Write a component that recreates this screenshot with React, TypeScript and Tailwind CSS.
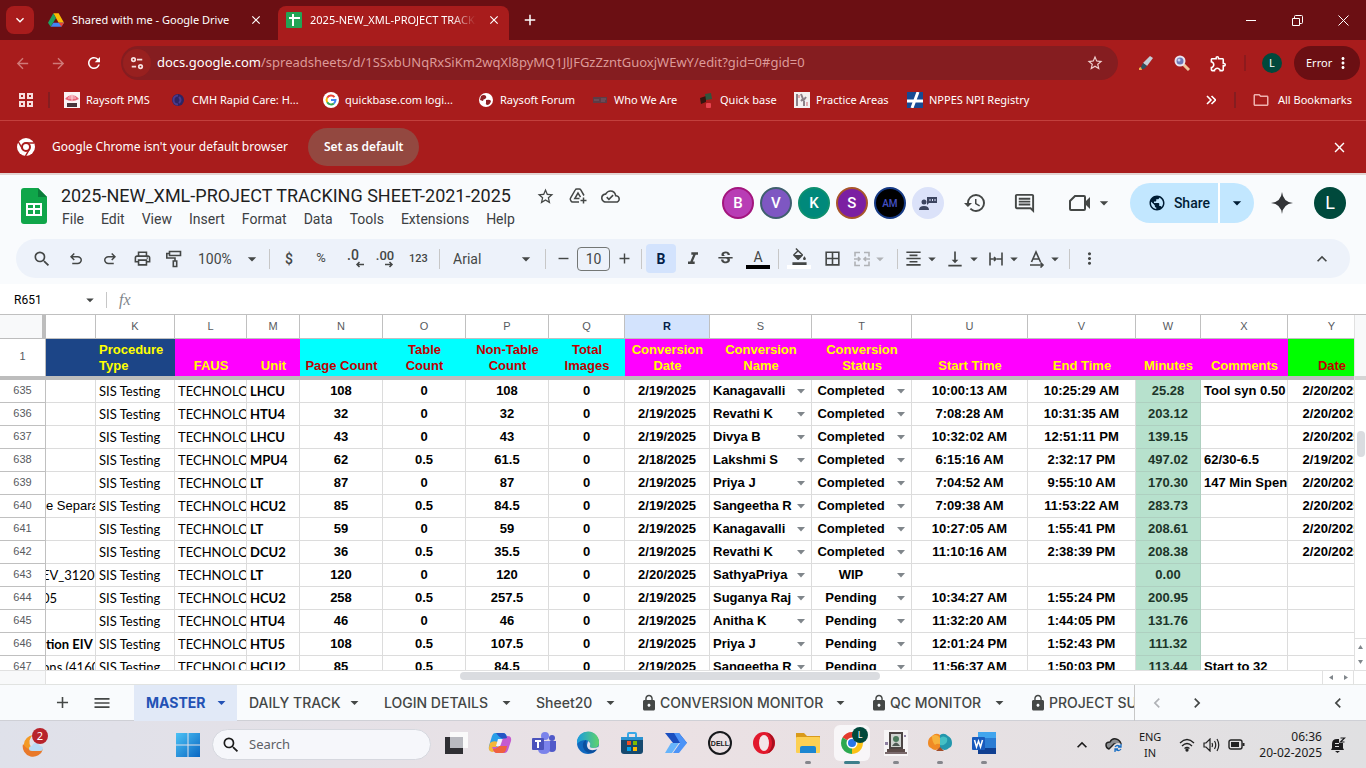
import type { ReactNode } from 'react';
import {
  MdAdd,
  MdArrowBack,
  MdArrowDropDown,
  MdArrowForward,
  MdBorderAll,
  MdChevronLeft,
  MdChevronRight,
  MdClose,
  MdExpandLess,
  MdExpandMore,
  MdFormatAlignCenter,
  MdFormatColorFill,
  MdFormatItalic,
  MdHistory,
  MdLock,
  MdMenu,
  MdMoreVert,
  MdOutlineCloudDone,
  MdOutlineExtension,
  MdOutlineFolder,
  MdOutlineInsertComment,
  MdOutlinePrint,
  MdPublic,
  MdRefresh,
  MdRemove,
  MdSearch,
  MdStarBorder,
  MdStrikethroughS,
  MdVerticalAlignBottom,
} from 'react-icons/md';

const CHROME_FONT = "font-['Noto_Sans',sans-serif]";

interface Row {
  num: number;
  title?: string;
  titleStyle?: string;
  cut?: boolean;
  unit: string;
  pages: string;
  tables: string;
  nonTables: string;
  date: string;
  name: string;
  status: string;
  start: string;
  end: string;
  minutes: string;
  comment?: string;
  qcDate?: string;
}

const PLAIN_TITLE = "font-['Lato',sans-serif] font-normal";
const BOLD_TITLE = "font-['Lato',sans-serif] font-bold";

const ROWS: Row[] = [
  { num: 635, unit: 'LHCU', pages: '108', tables: '0', nonTables: '108', date: '2/19/2025', name: 'Kanagavalli', status: 'Completed', start: '10:00:13 AM', end: '10:25:29 AM', minutes: '25.28', comment: 'Tool syn 0.50', qcDate: '2/20/2025' },
  { num: 636, unit: 'HTU4', pages: '32', tables: '0', nonTables: '32', date: '2/19/2025', name: 'Revathi K', status: 'Completed', start: '7:08:28 AM', end: '10:31:35 AM', minutes: '203.12', qcDate: '2/20/2025' },
  { num: 637, unit: 'LHCU', pages: '43', tables: '0', nonTables: '43', date: '2/19/2025', name: 'Divya B', status: 'Completed', start: '10:32:02 AM', end: '12:51:11 PM', minutes: '139.15', qcDate: '2/20/2025' },
  { num: 638, unit: 'MPU4', pages: '62', tables: '0.5', nonTables: '61.5', date: '2/18/2025', name: 'Lakshmi S', status: 'Completed', start: '6:15:16 AM', end: '2:32:17 PM', minutes: '497.02', comment: '62/30-6.5', qcDate: '2/19/2025' },
  { num: 639, unit: 'LT', pages: '87', tables: '0', nonTables: '87', date: '2/19/2025', name: 'Priya J', status: 'Completed', start: '7:04:52 AM', end: '9:55:10 AM', minutes: '170.30', comment: '147 Min Spent', qcDate: '2/20/2025' },
  { num: 640, title: 'e Separation', titleStyle: 'font-normal', unit: 'HCU2', pages: '85', tables: '0.5', nonTables: '84.5', date: '2/19/2025', name: 'Sangeetha R', status: 'Completed', start: '7:09:38 AM', end: '11:53:22 AM', minutes: '283.73', qcDate: '2/20/2025' },
  { num: 641, unit: 'LT', pages: '59', tables: '0', nonTables: '59', date: '2/19/2025', name: 'Kanagavalli', status: 'Completed', start: '10:27:05 AM', end: '1:55:41 PM', minutes: '208.61', qcDate: '2/20/2025' },
  { num: 642, unit: 'DCU2', pages: '36', tables: '0.5', nonTables: '35.5', date: '2/19/2025', name: 'Revathi K', status: 'Completed', start: '11:10:16 AM', end: '2:38:39 PM', minutes: '208.38', qcDate: '2/20/2025' },
  { num: 643, title: 'EV_3120', titleStyle: PLAIN_TITLE, cut: true, unit: 'LT', pages: '120', tables: '0', nonTables: '120', date: '2/20/2025', name: 'SathyaPriya', status: 'WIP', start: '', end: '', minutes: '0.00' },
  { num: 644, title: '05', titleStyle: PLAIN_TITLE, cut: true, unit: 'HCU2', pages: '258', tables: '0.5', nonTables: '257.5', date: '2/19/2025', name: 'Suganya Raj', status: 'Pending', start: '10:34:27 AM', end: '1:55:24 PM', minutes: '200.95' },
  { num: 645, unit: 'HTU4', pages: '46', tables: '0', nonTables: '46', date: '2/19/2025', name: 'Anitha K', status: 'Pending', start: '11:32:20 AM', end: '1:44:05 PM', minutes: '131.76' },
  { num: 646, title: 'tion EIV', titleStyle: BOLD_TITLE, unit: 'HTU5', pages: '108', tables: '0.5', nonTables: '107.5', date: '2/19/2025', name: 'Priya J', status: 'Pending', start: '12:01:24 PM', end: '1:52:43 PM', minutes: '111.32' },
  { num: 647, title: 'ons (4160)', titleStyle: PLAIN_TITLE, cut: true, unit: 'HCU2', pages: '85', tables: '0.5', nonTables: '84.5', date: '2/19/2025', name: 'Sangeetha R', status: 'Pending', start: '11:56:37 AM', end: '1:50:03 PM', minutes: '113.44', comment: 'Start to 32' },
];

const COLUMNS = [
  { letter: '', width: 50, lines: [], style: 'bg-[#1c4587] text-[#ffff00] text-left' },
  { letter: 'K', width: 79, lines: ['Procedure', 'Type'], style: 'bg-[#1c4587] text-[#ffff00] text-left' },
  { letter: 'L', width: 72, lines: ['FAUS'], style: 'bg-[#ff00ff] text-[#ffff00] text-center' },
  { letter: 'M', width: 53, lines: ['Unit'], style: 'bg-[#ff00ff] text-[#ffff00] text-center' },
  { letter: 'N', width: 83, lines: ['Page Count'], style: 'bg-[#00ffff] text-[#c00000] text-center' },
  { letter: 'O', width: 83, lines: ['Table', 'Count'], style: 'bg-[#00ffff] text-[#c00000] text-center' },
  { letter: 'P', width: 83, lines: ['Non-Table', 'Count'], style: 'bg-[#00ffff] text-[#c00000] text-center' },
  { letter: 'Q', width: 76, lines: ['Total', 'Images'], style: 'bg-[#00ffff] text-[#c00000] text-center' },
  { letter: 'R', width: 85, lines: ['Conversion', 'Date'], style: 'bg-[#ff00ff] text-[#ffff00] text-center' },
  { letter: 'S', width: 102, lines: ['Conversion', 'Name'], style: 'bg-[#ff00ff] text-[#ffff00] text-center' },
  { letter: 'T', width: 100, lines: ['Conversion', 'Status'], style: 'bg-[#ff00ff] text-[#ffff00] text-center' },
  { letter: 'U', width: 116, lines: ['Start Time'], style: 'bg-[#ff00ff] text-[#ffff00] text-center' },
  { letter: 'V', width: 108, lines: ['End Time'], style: 'bg-[#ff00ff] text-[#ffff00] text-center' },
  { letter: 'W', width: 65, lines: ['Minutes'], style: 'bg-[#ff00ff] text-[#ffff00] text-center' },
  { letter: 'X', width: 87, lines: ['Comments'], style: 'bg-[#ff00ff] text-[#ffff00] text-center' },
  { letter: 'Y', width: 88, lines: ['Date'], style: 'bg-[#00ff00] text-[#c00000] text-center' },
];

const BOOKMARKS = [
  { label: 'Raysoft PMS', width: 'w-[106px]', icon: <PmsIcon /> },
  { label: 'CMH Rapid Care: H...', width: 'w-[153px]', icon: <CmhIcon /> },
  { label: 'quickbase.com logi...', width: 'w-[155px]', icon: <GoogleIcon /> },
  { label: 'Raysoft Forum', width: 'w-[114px]', icon: <GlobeIcon /> },
  { label: 'Who We Are', width: 'w-[106px]', icon: <WhoIcon /> },
  { label: 'Quick base', width: 'w-[96px]', icon: <QuickbaseIcon /> },
  { label: 'Practice Areas', width: 'w-[113px]', icon: <PracticeIcon /> },
  { label: 'NPPES NPI Registry', width: 'w-[130px]', icon: <NppesIcon /> },
];

const MENUS = ['File', 'Edit', 'View', 'Insert', 'Format', 'Data', 'Tools', 'Extensions', 'Help'];

const PEOPLE = [
  { letter: 'B', style: 'bg-[#b83db5] border-[#a3157e] text-white text-[15px]' },
  { letter: 'V', style: 'bg-[#7e57c2] border-[#3f5f6e] text-white text-[15px]' },
  { letter: 'K', style: 'bg-[#00897b] border-[#0d8f6f] text-white text-[15px]' },
  { letter: 'S', style: 'bg-[#7b1fa2] border-[#a8562a] text-white text-[15px]' },
  { letter: 'AM', style: 'bg-black border-[#163a85] text-[#4450c4] text-[10px]' },
];

const SHEET_TABS = [
  { label: 'DAILY TRACK', width: 'w-[135px]', locked: false },
  { label: 'LOGIN DETAILS', width: 'w-[152px]', locked: false },
  { label: 'Sheet20', width: 'w-[104px]', locked: false },
  { label: 'CONVERSION MONITOR', width: 'w-[230px]', locked: true },
  { label: 'QC MONITOR', width: 'w-[159px]', locked: true },
  { label: 'PROJECT SUMMARY', width: 'w-[190px]', locked: true },
];

/* ---------- bookmark icons ---------- */

function PmsIcon() {
  return (
    <svg width="16" height="16" viewBox="0 0 16 16">
      <rect width="16" height="16" fill="#fbf3f4" />
      <path d="M1 7Q8-1 15 7Q8 11 1 7Z" fill="#e8657a" />
      <path d="M4 6h8M5 4h6M8 2v8" stroke="#fbd5da" strokeWidth="1" />
      <rect x="3" y="11" width="10" height="4" fill="#47353b" />
    </svg>
  );
}

function CmhIcon() {
  return (
    <svg width="16" height="16" viewBox="0 0 16 16">
      <circle cx="8" cy="8" r="6" fill="#2d2463" />
      <path d="M8 3.500a4.500 4.500 0 1 0 0 9M9 5q3 3 0 6" stroke="#4a3a8c" fill="none" strokeWidth="2" />
    </svg>
  );
}

function GoogleIcon() {
  return (
    <svg width="16" height="16" viewBox="0 0 16 16">
      <circle cx="8" cy="8" r="8" fill="#fff" />
      <g fill="none" strokeWidth="2">
        <path d="M11.500 5.200A4.500 4.500 0 0 0 4.200 5.700" stroke="#ea4335" />
        <path d="M4.200 5.700A4.500 4.500 0 0 0 4.200 10.300" stroke="#fbbc05" />
        <path d="M4.200 10.300A4.500 4.500 0 0 0 10.900 11.400" stroke="#34a853" />
        <path d="M10.900 11.400A4.500 4.500 0 0 0 12.500 8H8" stroke="#4285f4" />
      </g>
    </svg>
  );
}

function GlobeIcon() {
  return (
    <svg width="16" height="16" viewBox="0 0 16 16">
      <circle cx="8" cy="8" r="7" fill="#fff" />
      <path d="M3 4q3-2 5 0 1 2-1 3-2 0-2 2l-3-1zM8 8q4-1 5 1-1 4-4 4-2-1-1-2z" fill="#8d2024" />
    </svg>
  );
}

function WhoIcon() {
  return (
    <svg width="16" height="16" viewBox="0 0 16 16">
      <rect x="1" y="5" width="14" height="6" fill="#5d3c46" />
      <path d="M2 8h5M9 7h5M9 9h4" stroke="#7d5b66" strokeWidth="1" />
    </svg>
  );
}

function QuickbaseIcon() {
  return (
    <svg width="16" height="16" viewBox="0 0 16 16">
      <path d="M2 6l6-2v6l-5 2z" fill="#34150f" />
      <path d="M7 2l6-1 1 6-6 1z" fill="#31553d" />
      <rect x="8" y="11" width="5" height="5" rx="1" fill="#e8434f" />
    </svg>
  );
}

function PracticeIcon() {
  return (
    <svg width="16" height="16" viewBox="0 0 16 16">
      <rect width="16" height="16" fill="#f4f0f0" />
      <path d="M3 2v12M7 2l2 5-2 2M9 9l3-4M10 9v5" stroke="#8b8088" strokeWidth="2" fill="none" />
      <path d="M5 3v3M13 10v4" stroke="#c96a70" />
    </svg>
  );
}

function NppesIcon() {
  return (
    <svg width="16" height="16" viewBox="0 0 16 16">
      <rect width="16" height="16" fill="#174a92" />
      <path d="M0 9h16M11 0L5 16" stroke="#fff" strokeWidth="3" />
    </svg>
  );
}

/* ---------- browser icons ---------- */

function DriveIcon() {
  return (
    <svg width="16" height="16" viewBox="0 0 24 22">
      <path d="M8 1h8l8 14h-8z" fill="#fbbc04" />
      <path d="M8 1l4 7-8 13-4-6z" fill="#1ea362" />
      <path d="M8 15h16l-4 6H4z" fill="#4285f4" />
      <path d="M16 15h8l-4 6z" fill="#ea4335" />
    </svg>
  );
}

function SheetsFavicon() {
  return (
    <svg width="16" height="16" viewBox="0 0 16 16">
      <rect width="16" height="16" rx="1" fill="#23a455" />
      <path d="M3 6h11M7 2v12" stroke="#fff" strokeWidth="2" />
    </svg>
  );
}

function TuneIcon() {
  return (
    <svg width="14" height="14" viewBox="0 0 16 16" fill="none" stroke="#f6dede" strokeWidth="2">
      <circle cx="4" cy="4" r="2" />
      <path d="M8 4h6M2 12h5" />
      <circle cx="12" cy="12" r="2" />
    </svg>
  );
}

function AppsIcon() {
  return (
    <svg width="16" height="16" viewBox="0 0 16 16" fill="none" stroke="#f6dede" strokeWidth="2">
      <path d="M2 2h4v4H2zM10 2h4v4h-4zM2 10h4v4H2zM10 10h4v4h-4z" />
    </svg>
  );
}

function PenIcon() {
  return (
    <svg width="16" height="16" viewBox="0 0 16 16">
      <path d="M5 8l7-7 3 2-6 8z" fill="#c3cdd6" />
      <path d="M5 8l4 3-3 3H2z" fill="#2d5261" />
      <path d="M1 13l2-1 1 3H1z" fill="#f0b14a" />
    </svg>
  );
}

function LensIcon() {
  return (
    <svg width="16" height="16" viewBox="0 0 16 16">
      <path d="M9 9l6 6" stroke="#f1c69c" strokeWidth="3" />
      <circle cx="6" cy="6" r="4.500" fill="#6e78b8" stroke="#e9e3ee" strokeWidth="2" />
      <circle cx="5" cy="5" r="1.500" fill="#c7d0f0" />
    </svg>
  );
}

function ChromeMono() {
  return (
    <svg width="18" height="18" viewBox="0 0 18 18">
      <circle cx="9" cy="9" r="9" fill="#fff" />
      <circle cx="9" cy="9" r="4" fill="none" stroke="#a81c1c" strokeWidth="2" />
      <path d="M9 5h8M5.500 11L1.500 4M12.500 11L8.500 18" stroke="#a81c1c" strokeWidth="1.500" />
    </svg>
  );
}

/* ---------- sheet icons ---------- */

function SheetsLogo() {
  return (
    <svg width="26" height="36" viewBox="0 0 26 36">
      <path d="M3 0h14l9 9v24a3 3 0 0 1-3 3H3a3 3 0 0 1-3-3V3a3 3 0 0 1 3-3z" fill="#10a64a" />
      <path d="M17 0l9 9h-9z" fill="#0b7d3b" />
      <path d="M5 15h16v13H5zm2 2v3h5v-3zm7 0v3h5v-3zm-7 5v4h5v-4zm7 0v4h5v-4z" fill="#fff" fillRule="evenodd" />
    </svg>
  );
}

function MoveIcon() {
  return (
    <svg width="18" height="18" viewBox="0 0 18 18" fill="none" stroke="currentColor" strokeWidth="1.500">
      <path d="M10 15H3.500q-1 0-1.400-.800L1.500 13q-.5-1 0-1.800L6.200 3q.5-1 1.500-1h2.600q1 0 1.500 1l3.200 5.500" />
      <path d="M10.500 11.500H5.800L9 6l2.500 4.200M14.500 10.500v6M11.500 13.500h6" />
    </svg>
  );
}

function UndoIcon({ flip = false }: { flip?: boolean }) {
  return (
    <svg width="18" height="18" viewBox="0 -960 960 960" fill="currentColor" className={flip ? '-scale-x-100' : ''}>
      <path d="M280-200v-80h284q63 0 109.500-40T720-420q0-60-46.500-100T564-560H312l104 104-56 56-200-200 200-200 56 56-104 104h252q97 0 166.500 63T800-420q0 94-69.500 157T564-200H280Z" />
    </svg>
  );
}

function PaintIcon() {
  return (
    <svg width="18" height="18" viewBox="0 0 18 18" fill="none" stroke="currentColor" strokeWidth="1.600">
      <path d="M4.500 1.500h11v4h-11zM4.500 3.500H1.800v4.500H10v3" />
      <path d="M8.300 11h3.400v5.500H8.300z" />
    </svg>
  );
}

function MergeIcon() {
  return (
    <svg width="18" height="18" viewBox="0 0 18 18" fill="none" stroke="currentColor" strokeWidth="1.600">
      <path d="M7 2.500H2v4M11 2.500h5v4M7 15.500H2v-4M11 15.500h5v-4M1 9h6M11 9h6M5 7l2 2-2 2M13 7l-2 2 2 2" />
    </svg>
  );
}

function WrapIcon() {
  return (
    <svg width="18" height="18" viewBox="0 0 18 18" fill="none" stroke="currentColor" strokeWidth="1.600">
      <path d="M3 2.500v13M15 2.500v13M3 9h5M10 9h5M7 7l2 2-2 2" />
    </svg>
  );
}

function RotateIcon() {
  return (
    <svg width="18" height="18" viewBox="0 0 18 18" fill="none" stroke="currentColor" strokeWidth="1.600">
      <path d="M3.500 12L8 2l4.500 10M5 9h6M2 15h13M12.500 12.500L15 15l-2.500 2.500" />
    </svg>
  );
}

function DecimalArrow({ right = false }: { right?: boolean }) {
  return (
    <svg width="9" height="7" viewBox="0 0 9 7" stroke="currentColor" strokeWidth="1.500" fill="none" className={right ? '-scale-x-100' : ''}>
      <path d="M9 3.500H2M4.500 1L2 3.500 4.500 6" />
    </svg>
  );
}

function MeetIcon() {
  return (
    <svg width="24" height="20" viewBox="0 0 24 20" fill="none">
      <path d="M7 3h9q1 0 1 1v12q0 1-1 1H3q-1 0-1-1V8z" stroke="#444746" strokeWidth="2" />
      <path d="M17 9l5-5v12l-5-5z" fill="#444746" />
    </svg>
  );
}

function PeopleIcon() {
  return (
    <svg width="20" height="18" viewBox="0 0 20 18" fill="#3c4560">
      <circle cx="6" cy="8" r="2.500" />
      <path d="M1 16q0-4 5-4t5 4z" />
      <path d="M9 3h10v6h-8l-2 2z" />
      <path d="M12 5v2M14.500 5v2M17 5v2" stroke="#dbe2f9" />
    </svg>
  );
}

function SparkIcon() {
  return (
    <svg width="24" height="24" viewBox="0 0 24 24">
      <path d="M12 1Q13 11 23 12Q13 13 12 23Q11 13 1 12Q11 11 12 1Z" fill="#333538" />
      <path d="M12 5Q13 11 19 12Q13 13 12 19Q11 13 5 12Q11 11 12 5Z" fill="#333538" stroke="#333538" />
    </svg>
  );
}

/* ---------- taskbar icons ---------- */

function WeatherIcon() {
  return (
    <svg width="26" height="26" viewBox="0 0 26 26">
      <path d="M13 3A10 10 0 1 0 23 17A8 8 0 0 1 13 3Z" fill="#f39a26" />
      <path d="M3 12a10 10 0 0 0 20 5Q10 22 3 12Z" fill="#e9792a" />
      <path d="M12 19q-3 0-3-2.500t3-2.500q1-3 4-3t4 3q3 0 3 2.500T20 19z" fill="#b9dcf6" />
    </svg>
  );
}

function WindowsIcon() {
  return (
    <svg width="24" height="24" viewBox="0 0 24 24">
      <linearGradient id="win" x1="0" y1="0" x2="1" y2="1">
        <stop offset="0" stopColor="#4cc2f5" />
        <stop offset="1" stopColor="#0a66c2" />
      </linearGradient>
      <path d="M0 0h11.500v11.500H0zM12.500 0H24v11.500H12.500zM0 12.500h11.500V24H0zM12.500 12.500H24V24H12.500z" fill="url(#win)" />
    </svg>
  );
}

function TaskViewIcon() {
  return (
    <svg width="26" height="26" viewBox="0 0 26 26">
      <rect x="7" y="2" width="18" height="16" fill="#fafafa" />
      <rect x="2" y="7" width="18" height="17" fill="#2f2f33" />
      <rect x="7" y="7" width="13" height="11" fill="#b9bac0" />
    </svg>
  );
}

function CopilotIcon() {
  return (
    <svg width="24" height="24" viewBox="0 0 24 24">
      <path d="M7 2h8q3 0 4 4l1 2h-6q-2 0-3 3l-2 6q-1 3-4 3H4q-4 0-3-5L4 5q1-3 3-3z" fill="#2a9fe8" />
      <path d="M2 12q3-3 8-1l-2 7q-1 3-4 3-4-1-3-5z" fill="#f3b63a" />
      <path d="M17 22H9q-3 0-4-4l-1-2h6q2 0 3-3l2-6q1-2 4-2 5 0 4 5l-3 9q-1 3-3 3z" fill="#c45bd0" />
      <path d="M5 18q3 0 5-2l1-1h8l-1 4q-1 3-3 3H9q-3 0-4-4z" fill="#f0603f" />
      <path d="M10 8h4l-2 7H8z" fill="#f4f2fb" />
      <path d="M8 2h7q3 0 4 5-4 1-6 0T8 2z" fill="#2556c4" />
    </svg>
  );
}

function TeamsIcon() {
  return (
    <svg width="26" height="24" viewBox="0 0 26 24">
      <circle cx="21" cy="7" r="3" fill="#5059c9" />
      <circle cx="14" cy="5" r="4" fill="#7b83eb" />
      <path d="M17 10h8v7q0 4-4 4t-4-3z" fill="#5059c9" />
      <path d="M8 10h11v8q0 5-6 5t-6-5z" fill="#7b83eb" />
      <rect x="1" y="7" width="12" height="12" rx="1" fill="#4b53bc" />
      <path d="M4 10h6M7 10v7" stroke="#fff" strokeWidth="2" />
    </svg>
  );
}

function EdgeIcon() {
  return (
    <svg width="24" height="24" viewBox="0 0 24 24">
      <linearGradient id="edgeTop" x1="0" y1="0" x2="1" y2="0">
        <stop offset="0" stopColor="#1a9be0" />
        <stop offset="1" stopColor="#5fd36b" />
      </linearGradient>
      <circle cx="12" cy="12" r="11" fill="#1068bf" />
      <path d="M1 11A11 11 0 0 1 23 12q0 5-6 5-4 0-3-3 1-4-4-5-6 0-9 4z" fill="url(#edgeTop)" />
      <path d="M10 9q-4 2-3 7 2 6 8 6 4 0 7-5-7 4-11-1-2-4-1-7z" fill="#0b4f9e" />
      <path d="M12 10q3 2 2 4-1 3 3 3 3 0 5-1l1 2-5 1q-7 1-7-5z" fill="#e6e0ea" />
    </svg>
  );
}

function StoreIcon() {
  return (
    <svg width="24" height="24" viewBox="0 0 24 24">
      <path d="M8 6V3q0-1 1-1h6q1 0 1 1v3" stroke="#38a8e8" strokeWidth="2" fill="none" />
      <path d="M1 6h22v14q0 3-3 3H4q-3 0-3-3z" fill="#16496f" />
      <path d="M1 6h22v3H1z" fill="#2a92d0" />
      <path d="M7 10h4v4H7z" fill="#f25022" />
      <path d="M13 10h4v4h-4z" fill="#7fba00" />
      <path d="M7 16h4v4H7z" fill="#00a4ef" />
      <path d="M13 16h4v4h-4z" fill="#ffb900" />
    </svg>
  );
}

function AutomateIcon() {
  return (
    <svg width="24" height="22" viewBox="0 0 24 22">
      <path d="M1 1h14l8 10H9z" fill="#1b4fc0" />
      <path d="M15 1l8 10-8 10H9l7-10-6-10z" fill="#4c93f7" />
      <path d="M7 11h8l-7 10H1z" fill="#66b4fb" />
    </svg>
  );
}

function DellIcon() {
  return (
    <svg width="26" height="26" viewBox="0 0 26 26">
      <circle cx="13" cy="13" r="11" fill="none" stroke="#17191c" strokeWidth="2" />
      <text x="13" y="16" textAnchor="middle" fontSize="7" fontWeight="700" fontFamily="Liberation Sans" fill="#17191c">
        DELL
      </text>
    </svg>
  );
}

function OperaIcon() {
  return (
    <svg width="24" height="24" viewBox="0 0 24 24">
      <circle cx="12" cy="12" r="11" fill="#e2182c" />
      <path d="M15 1.500A11 11 0 0 1 15 22.500Q20 18 20 12T15 1.500z" fill="#a7101f" />
      <ellipse cx="12" cy="12" rx="5" ry="8" fill="#f3e6e8" />
    </svg>
  );
}

function ExplorerIcon() {
  return (
    <svg width="26" height="24" viewBox="0 0 26 24">
      <path d="M1 2h8l3 3h13v6H1z" fill="#d99a1b" />
      <rect x="1" y="6" width="24" height="16" rx="1" fill="#fcd053" />
      <path d="M5 22v-5q0-2 2-2h12q2 0 2 2v5z" fill="#1c86d1" />
    </svg>
  );
}

function ChromeIcon() {
  return (
    <svg width="24" height="24" viewBox="0 0 24 24">
      <path d="M12 12L2.500 6.500A11 11 0 0 1 21.500 6.500H12z" fill="#e33b2e" />
      <path d="M12 12L21.500 6.500A11 11 0 0 1 12 23z" fill="#fbc116" />
      <path d="M12 12V23A11 11 0 0 1 2.500 6.500z" fill="#2da94f" />
      <circle cx="12" cy="12" r="5.500" fill="#fff" />
      <circle cx="12" cy="12" r="4" fill="#2a76e8" />
    </svg>
  );
}

function KioskIcon() {
  return (
    <svg width="24" height="26" viewBox="0 0 24 26">
      <rect width="24" height="26" fill="#f6f4f5" />
      <path d="M6 3h12v15H6z" fill="#cfd3d0" stroke="#4c4544" strokeWidth="2" />
      <circle cx="12" cy="9" r="3" fill="#4b7a5c" />
      <path d="M8 16q4-7 8 0z" fill="#4f5a54" />
      <path d="M3 19h18v3H3z" fill="#5b4a48" />
      <path d="M1 22h22v2H1z" fill="#7a6a6c" />
      <path d="M1 12h3v3H1zM20 5h2v2h-2z" fill="#8e7fa0" />
    </svg>
  );
}

function BrainIcon() {
  return (
    <svg width="26" height="22" viewBox="0 0 26 22">
      <path d="M13 3q-4-3-8 1-4 2-4 7 0 4 3 5 4 4 9 0z" fill="#f08a24" />
      <path d="M5 4q5-3 8 2v6q-3-1-5 1-3-3-3-9z" fill="#f6b23c" />
      <path d="M13 3q4-3 8 1 4 2 4 7 0 4-3 5-4 4-9 0z" fill="#2397ad" />
      <path d="M13 6q3-3 7 0 1 4-2 6-2 2-5 1z" fill="#45c0c4" />
      <path d="M9 19l4-4 4 4z" fill="#a34d2a" />
    </svg>
  );
}

function WordIcon() {
  return (
    <svg width="26" height="24" viewBox="0 0 26 24">
      <rect x="7" y="1" width="18" height="22" rx="1" fill="#2b7cd3" />
      <path d="M7 1h18v6H7z" fill="#41a5ee" />
      <path d="M7 17h18v6H7z" fill="#103f91" />
      <rect x="1" y="6" width="13" height="13" rx="1" fill="#185abd" />
      <path d="M3.500 9l2 7 2-6 2 6 2-7" stroke="#fff" strokeWidth="1.500" fill="none" />
    </svg>
  );
}

function OneDriveIcon() {
  return (
    <svg width="18" height="16" viewBox="0 0 18 16">
      <path d="M4 12q-3-1-3-4t4-3q2-4 6-3t5 5H9z" fill="#8b8d90" stroke="#222" strokeWidth="1.500" />
      <circle cx="13" cy="11" r="5" fill="#e6e1e2" />
      <path d="M10 10q2-3 6 0M16 12q-2 3-6 0M16 7v3h-3M10 15v-3h3" stroke="#1a6fc4" strokeWidth="1.300" fill="none" />
    </svg>
  );
}

function WifiIcon() {
  return (
    <svg width="16" height="14" viewBox="0 0 16 14" fill="none" stroke="#222" strokeWidth="1.300">
      <path d="M1 5q7-7 14 0M3 8q5-5 10 0M5.500 10.500q2.500-2 5 0" />
      <circle cx="8" cy="12" r="1" fill="#222" />
    </svg>
  );
}

function SpeakerIcon() {
  return (
    <svg width="17" height="14" viewBox="0 0 17 14" fill="none" stroke="#222" strokeWidth="1.200">
      <path d="M1 5h2l4-4v12L3 9H1zM9 5q1 2 0 4M11.500 3q2.500 4 0 8M14 1q3.500 6 0 12" />
    </svg>
  );
}

function BatteryIcon() {
  return (
    <svg width="17" height="12" viewBox="0 0 17 12">
      <rect x="1" y="1" width="13" height="9" rx="2" fill="none" stroke="#222" strokeWidth="1.400" />
      <rect x="3" y="3" width="8" height="5" fill="#222" />
      <path d="M15.500 4v3" stroke="#222" strokeWidth="2" />
    </svg>
  );
}

function BellIcon() {
  return (
    <svg width="16" height="16" viewBox="0 0 16 16">
      <path d="M2 11V7q0-5 5-5h2v4h4v5l1 2H1z" fill="#1c1c1e" />
      <path d="M5 14h5l-2.500 2z" fill="#1c1c1e" />
      <path d="M10.500 1h4l-4 4h4" stroke="#1c1c1e" strokeWidth="1.200" fill="none" />
      <path d="M5 6.500h4M5 9.500h4" stroke="#e0e0e2" strokeWidth="1" fill="none" />
    </svg>
  );
}

/* ---------- browser chrome ---------- */

function TabStrip() {
  return (
    <div className="flex h-10 items-end bg-[#6b0f13] text-[11px] text-white">
      <button aria-label="Search tabs" className="mb-1.5 ml-1.5 flex size-7 items-center justify-center rounded-lg bg-[#a81c1c]">
        <MdExpandMore size={16} />
      </button>
      <div className="flex h-[34px] w-[244px] items-center pb-1.5 pl-3.5">
        <DriveIcon />
        <span className="ml-2 flex-1 whitespace-nowrap">Shared with me - Google Drive</span>
        <button aria-label="Close tab" className="mr-3.5 flex size-4 items-center justify-center">
          <MdClose size={14} />
        </button>
      </div>
      <div className="flex h-[34px] w-[231px] items-center rounded-t-lg bg-[#a81c1c] pb-1.5 pl-2">
        <SheetsFavicon />
        <span className="ml-2 w-[166px] overflow-hidden whitespace-nowrap [mask-image:linear-gradient(to_right,black_85%,transparent)]">
          2025-NEW_XML-PROJECT TRACKING
        </span>
        <button aria-label="Close tab" className="ml-2.5 flex size-4 items-center justify-center">
          <MdClose size={14} />
        </button>
      </div>
      <button aria-label="New tab" className="mb-2.5 ml-[11px] flex size-5 items-center justify-center">
        <MdAdd size={18} />
      </button>
      <div className="ml-auto flex h-10">
        <button aria-label="Minimise" className="flex w-[46px] items-center justify-center">
          <svg width="10" height="10" stroke="white"><path d="M0 5.500h10" /></svg>
        </button>
        <button aria-label="Restore" className="flex w-[46px] items-center justify-center">
          <svg width="11" height="11" stroke="white" fill="none"><path d="M.5 3.500h7v7h-7zM2.500 3.500v-2q0-1 1-1h6q1 0 1 1v6q0 1-1 1h-2" /></svg>
        </button>
        <button aria-label="Close" className="flex w-[46px] items-center justify-center">
          <svg width="11" height="11" stroke="white"><path d="M.5 .5l10 10M10.500 .5l-10 10" /></svg>
        </button>
      </div>
    </div>
  );
}

function AddressBar() {
  return (
    <div className="flex h-[46px] items-center pl-1 text-white">
      <button aria-label="Back" className="flex w-9 justify-center text-[#d07a78]"><MdArrowBack size={17} /></button>
      <button aria-label="Forward" className="flex w-9 justify-center text-[#d07a78]"><MdArrowForward size={17} /></button>
      <button aria-label="Reload" className="flex w-9 justify-center"><MdRefresh size={18} /></button>
      <div className="ml-[9px] flex h-[34px] flex-1 items-center rounded-full bg-[#851d20] pr-3.5 pl-0.5">
        <button aria-label="Site information" className="flex size-7 items-center justify-center rounded-full bg-[#98201f]"><TuneIcon /></button>
        <p className="ml-1.5 flex-1 truncate text-[13px] text-[#dd9a98]">
          <span className="text-white">docs.google.com</span>/spreadsheets/d/1SSxbUNqRxSiKm2wqXl8pyMQ1JlJFGzZzntGuoxjWEwY/edit?gid=0#gid=0
        </p>
        <button aria-label="Bookmark this tab"><MdStarBorder size={18} className="text-[#f0cfce]" /></button>
      </div>
      <div className="ml-2.5 flex items-center">
        <button aria-label="Pen" className="flex w-9 justify-center"><PenIcon /></button>
        <button aria-label="Zoom" className="flex w-9 justify-center"><LensIcon /></button>
        <button aria-label="Extensions" className="flex w-9 justify-center"><MdOutlineExtension size={19} /></button>
      </div>
      <span className="ml-2 h-4 w-0.5 bg-[#8d1a1d]" />
      <span className="ml-4 flex size-5 items-center justify-center rounded-full bg-[#00493c] text-[11px]">L</span>
      <button className="mr-1.5 ml-3 flex h-[34px] w-[66px] items-center rounded-full bg-[#6b0f13] pl-3 text-[11px]">
        Error
        <MdMoreVert size={18} className="ml-0.5 shrink-0" />
      </button>
    </div>
  );
}

function BookmarksBar() {
  return (
    <nav className="flex h-[35px] items-center border-b border-[#c2403d] pb-1.5 text-[11px] text-white">
      <button aria-label="Apps" className="ml-[18px]"><AppsIcon /></button>
      <span className="mr-3.5 ml-3.5 h-4 w-0.5 bg-[#851d20]" />
      {BOOKMARKS.map((mark) => (
        <a key={mark.label} href="#" className={`flex shrink-0 items-center gap-1.5 whitespace-nowrap ${mark.width}`}>
          {mark.icon}
          {mark.label}
        </a>
      ))}
      <button aria-label="More bookmarks" className="ml-auto">
        <svg width="10" height="10" viewBox="0 0 10 10" fill="none" stroke="white" strokeWidth="1.600"><path d="M1 1l4 4-4 4M5.500 1l4 4-4 4" /></svg>
      </button>
      <span className="mr-4 ml-[18px] h-4 w-0.5 bg-[#851d20]" />
      <a href="#" className="mr-3.5 flex items-center gap-2">
        <MdOutlineFolder size={18} className="text-[#eeb0ae]" />
        All Bookmarks
      </a>
    </nav>
  );
}

function InfoBar() {
  return (
    <div className="flex h-[52px] items-center pl-[17px] text-xs text-white">
      <ChromeMono />
      <span className="ml-[17px]">Google Chrome isn't your default browser</span>
      <button className="ml-5 h-[38px] rounded-full bg-[#934840] px-4 font-semibold">Set as default</button>
      <button aria-label="Dismiss" className="mr-[18px] ml-auto"><MdClose size={17} /></button>
    </div>
  );
}

/* ---------- sheet ---------- */

function SheetHeader() {
  return (
    <header className="flex h-[63px] items-start border-t-2 border-[#e2d5d3] pl-[21px] text-[#1f1f1f]">
      <div className="pt-[13px]"><SheetsLogo /></div>
      <div className="ml-3.5 pt-[9px]">
        <div className="flex items-center text-[#444746]">
          <h1 className="text-[18px] leading-6 whitespace-nowrap text-[#1f1f1f]">2025-NEW_XML-PROJECT TRACKING SHEET-2021-2025</h1>
          <button aria-label="Star" className="ml-[25px]"><MdStarBorder size={19} /></button>
          <button aria-label="Move" className="ml-3.5"><MoveIcon /></button>
          <button aria-label="Saved to Drive" className="ml-3.5"><MdOutlineCloudDone size={19} /></button>
        </div>
        <nav className="flex gap-[17px] pt-px pl-px text-sm leading-5 text-[#3c4043]">
          {MENUS.map((menu) => (
            <button key={menu}>{menu}</button>
          ))}
        </nav>
      </div>
      <div className="mr-5 ml-auto flex h-14 shrink-0 items-center">
        <div className="flex gap-1.5">
          {PEOPLE.map((person) => (
            <span key={person.letter} className={`flex size-8 items-center justify-center rounded-full border-2 font-medium ${person.style}`}>
              {person.letter}
            </span>
          ))}
          <button aria-label="More people" className="flex size-8 items-center justify-center rounded-full bg-[#dbe2f9]"><PeopleIcon /></button>
        </div>
        <button aria-label="Version history" className="ml-[19px] text-[#444746]"><MdHistory size={24} /></button>
        <button aria-label="Comments" className="ml-[26px] text-[#444746]"><MdOutlineInsertComment size={23} /></button>
        <button aria-label="Meet" className="ml-8 flex items-center text-[#444746]">
          <MeetIcon />
          <MdArrowDropDown size={20} className="ml-0.5" />
        </button>
        <div className="ml-4 flex h-10 items-center rounded-full bg-[#c2e7ff] text-[#001d35]">
          <button className="flex h-10 items-center gap-2 border-r-2 border-white pr-2 pl-[18px] text-sm font-medium"><MdPublic size={18} />Share</button>
          <button aria-label="Share options" className="flex w-[34px] justify-center"><MdArrowDropDown size={20} /></button>
        </div>
        <button aria-label="Gemini" className="ml-4"><SparkIcon /></button>
        <span className="ml-5 flex size-8 items-center justify-center rounded-full bg-[#00493c] text-lg text-white">L</span>
      </div>
    </header>
  );
}

function Tool({ label, width = 'w-8', children }: { label: string; width?: string; children: ReactNode }) {
  return (
    <button aria-label={label} className={`flex h-7 shrink-0 items-center justify-center ${width}`}>
      {children}
    </button>
  );
}

function Separator() {
  return <span className="mx-[3px] h-5 w-px shrink-0 bg-[#c7c7c7]" />;
}

function Toolbar() {
  return (
    <div className="mr-4 ml-4 flex h-[39px] items-center rounded-full bg-[#edf2fa] pr-3 pl-2.5 text-sm text-[#444746]">
      <Tool label="Search menus"><MdSearch size={20} /></Tool>
      <Tool label="Undo" width="w-9"><UndoIcon /></Tool>
      <Tool label="Redo"><UndoIcon flip /></Tool>
      <Tool label="Print"><MdOutlinePrint size={19} /></Tool>
      <Tool label="Paint format"><PaintIcon /></Tool>
      <div className="flex w-[76px] shrink-0 items-center pl-2">
        <select aria-label="Zoom" defaultValue="100%" className="w-[44px] appearance-none bg-transparent">
          <option>100%</option>
        </select>
        <MdArrowDropDown size={20} />
      </div>
      <Separator />
      <Tool label="Currency"><span className="font-medium">$</span></Tool>
      <Tool label="Percent"><span className="text-[13px]">%</span></Tool>
      <Tool label="Decrease decimals">
        <span className="flex flex-col items-center leading-[11px] font-medium">
          .0
          <span className="pl-3"><DecimalArrow /></span>
        </span>
      </Tool>
      <Tool label="Increase decimals">
        <span className="flex flex-col items-end text-[13px] leading-[11px] font-medium">.00<DecimalArrow right /></span>
      </Tool>
      <Tool label="More formats" width="w-[35px]"><span className="text-[11px] font-medium">123</span></Tool>
      <Separator />
      <div className="flex w-[99px] shrink-0 items-center justify-between pr-1.5 pl-2.5">
        <select aria-label="Font" defaultValue="Arial" className="w-[60px] appearance-none bg-transparent">
          <option>Arial</option>
        </select>
        <MdArrowDropDown size={20} />
      </div>
      <Separator />
      <Tool label="Decrease font size" width="w-7"><MdRemove size={17} /></Tool>
      <input aria-label="Font size" defaultValue="10" className="h-6 w-[33px] shrink-0 rounded-sm border border-[#747775] bg-transparent text-center" />
      <Tool label="Increase font size" width="w-7"><MdAdd size={17} /></Tool>
      <Separator />
      <span className="flex w-8 shrink-0 justify-center">
        <button className="h-[29px] w-[30px] rounded-sm bg-[#d3e3fd] font-bold text-[#041e49]">B</button>
      </span>
      <Tool label="Italic"><MdFormatItalic size={20} /></Tool>
      <Tool label="Strikethrough"><MdStrikethroughS size={19} /></Tool>
      <Tool label="Text colour" width="w-[34px]">
        <span className="w-6 border-b-4 border-black text-center leading-4">A</span>
      </Tool>
      <Separator />
      <Tool label="Fill colour" width="w-[34px]">
        <span className="flex w-6 justify-center border-b-4 border-white"><MdFormatColorFill size={17} /></span>
      </Tool>
      <Tool label="Borders"><MdBorderAll size={19} /></Tool>
      <Tool label="Merge cells" width="w-[46px]">
        <span className="flex items-center text-[#b0b2b6]"><MergeIcon /><MdArrowDropDown size={18} /></span>
      </Tool>
      <Separator />
      <Tool label="Horizontal align" width="w-[42px]"><MdFormatAlignCenter size={19} /><MdArrowDropDown size={18} /></Tool>
      <Tool label="Vertical align" width="w-[41px]"><MdVerticalAlignBottom size={20} /><MdArrowDropDown size={18} /></Tool>
      <Tool label="Text wrapping" width="w-[41px]"><WrapIcon /><MdArrowDropDown size={18} /></Tool>
      <Tool label="Text rotation" width="w-[41px]"><RotateIcon /><MdArrowDropDown size={18} /></Tool>
      <Separator />
      <Tool label="More"><MdMoreVert size={19} /></Tool>
      <span className="ml-auto"><Tool label="Hide the menus"><MdExpandLess size={20} /></Tool></span>
    </div>
  );
}

function FormulaBar() {
  return (
    <div className="mt-1.5 flex h-[31px] items-center border-b border-[#c0c0c0] bg-white pt-px">
      <input aria-label="Name box" defaultValue="R651" className="w-[81px] pl-3.5 text-xs text-black" />
      <MdArrowDropDown size={18} className="text-[#444746]" />
      <span className="ml-[7px] h-4 w-px bg-[#c7c7c7]" />
      <label htmlFor="formula" className="ml-3 font-['Liberation_Serif',serif] text-base text-[#80868b] italic">fx</label>
      <input id="formula" className="ml-2 min-w-0 flex-1" />
    </div>
  );
}

function PickerCell({ value, centered = false }: { value: string; centered?: boolean }) {
  return (
    <td className="border-r border-b border-[#dcdcdc] p-0">
      <div className="flex items-center pr-1.5 pl-[3px]">
        <select
          aria-label={centered ? 'Status' : 'Name'}
          defaultValue={value}
          className={`min-w-0 flex-1 appearance-none overflow-hidden font-bold ${centered ? 'pr-1.5 text-center' : ''}`}
        >
          <option>{value}</option>
        </select>
        <svg width="8" height="5" viewBox="0 0 8 5" className="ml-1 shrink-0"><path d="M0 0h8L4 4.500z" fill="#80868b" /></svg>
      </div>
    </td>
  );
}

const CELL = 'overflow-hidden border-r border-b border-[#dcdcdc] whitespace-nowrap';

function Grid() {
  return (
    <div className="flex min-h-0 flex-1 bg-white">
      <div className="min-w-0 flex-1 overflow-hidden">
        <table className="w-[1376px] table-fixed border-separate border-spacing-0 font-['Liberation_Sans',Arial,sans-serif] text-[13px] leading-4 text-black">
          <colgroup>
            <col style={{ width: 46 }} />
            {COLUMNS.map((col) => (
              <col key={col.letter} style={{ width: col.width }} />
            ))}
          </colgroup>
          <thead>
            <tr className="h-6 text-[11px] text-[#575a5e]">
              <th className="border-r-4 border-b border-[#bdbdbd] bg-[#f8f9fa]" />
              {COLUMNS.map((col) => (
                <th
                  key={col.letter}
                  className={`border-r border-b border-[#c0c0c0] px-0 pt-0 pb-0.5 ${col.letter === 'R' ? 'bg-[#d3e3fd] font-bold text-[#041e49]' : 'font-normal'}`}
                >
                  {col.letter}
                </th>
              ))}
            </tr>
            <tr className="h-[41px]">
              <th className="border-r border-b-4 border-[#bdbdbd] px-0 pt-0 pb-1 text-[11px] font-normal text-[#575a5e]">1</th>
              {COLUMNS.map((col) => (
                <th key={col.letter} className={`border-b-4 border-[#bdbdbd] px-[3px] pt-0 pb-0.5 align-bottom font-bold whitespace-nowrap ${col.style}`}>
                  {col.lines.map((line) => (
                    <div key={line}>{line}</div>
                  ))}
                </th>
              ))}
            </tr>
          </thead>
          <tbody>
            {ROWS.map((row) => (
              <tr key={row.num} className="h-[23px] text-center font-bold">
                <th className="border-r border-b border-[#c0c0c0] p-0 align-top text-[11px] leading-5 font-normal text-[#575a5e]">{row.num}</th>
                <td className={`p-0 text-left ${CELL} ${row.titleStyle ?? ''}`}>
                  <span className={row.cut ? '-ml-1' : ''}>{row.title}</span>
                </td>
                <td className={`py-0 pr-0 pl-[3px] text-left font-['Lato',sans-serif] font-normal ${CELL}`}>SIS Testing</td>
                <td className={`py-0 pr-0 pl-[3px] text-left font-['Lato',sans-serif] font-normal ${CELL}`}>TECHNOLOGY</td>
                <td className={`py-0 pr-0 pl-[3px] text-left font-['Lato',sans-serif] ${CELL}`}>{row.unit}</td>
                <td className={`p-0 ${CELL}`}>{row.pages}</td>
                <td className={`p-0 ${CELL}`}>{row.tables}</td>
                <td className={`p-0 ${CELL}`}>{row.nonTables}</td>
                <td className={`p-0 ${CELL}`}>0</td>
                <td className={`p-0 ${CELL}`}>{row.date}</td>
                <PickerCell value={row.name} />
                <PickerCell value={row.status} centered />
                <td className={`p-0 ${CELL}`}>{row.start}</td>
                <td className={`p-0 ${CELL}`}>{row.end}</td>
                <td className="border-r border-b border-[#aed0c0] bg-[#b7e1cd] p-0 text-[#1d3529]">{row.minutes}</td>
                <td className={`py-0 pr-0 pl-[3px] text-left ${CELL}`}>{row.comment}</td>
                <td className={`p-0 ${CELL}`}>{row.qcDate}</td>
              </tr>
            ))}
          </tbody>
        </table>
      </div>
      {/* vertical scrollbar */}
      <div className="flex w-3 shrink-0 flex-col items-center border-l border-[#e1e1e1] bg-white">
        <div className="h-[65px] w-3 border-b-4 border-[#d5d5d5] bg-[#f8f9fa]" />
        <div className="mt-[51px] h-[26px] w-2 rounded-full bg-[#dadce0]" />
        <div className="mt-auto flex h-8 w-3 flex-col items-center justify-around border-t border-[#e1e1e1]">
          <svg width="5" height="4"><path d="M0 4h5L2.500 0z" fill="#80868b" /></svg>
          <svg width="5" height="4"><path d="M0 0h5L2.500 4z" fill="#80868b" /></svg>
        </div>
      </div>
    </div>
  );
}

function HorizontalScroll() {
  return (
    <div className="flex h-[14px] items-center border-t border-[#e1e1e1] bg-white">
      <div className="h-full w-[46px] border-r border-[#e1e1e1] bg-[#f8f9fa]" />
      <div className="mb-1 ml-[414px] h-2 w-[420px] rounded-full bg-[#dadce0]" />
      <div className="mr-3 ml-auto flex h-full w-8 items-center justify-around border-x border-[#e1e1e1]">
        <svg width="4" height="5"><path d="M4 0v5L0 2.500z" fill="#80868b" /></svg>
        <svg width="4" height="5"><path d="M0 0v5L4 2.500z" fill="#80868b" /></svg>
      </div>
    </div>
  );
}

function SheetTabs() {
  return (
    <div className="flex h-9 items-center border-t border-[#e1e3e1] bg-[#f9fbfd] font-['Inter',sans-serif] text-sm font-medium text-[#444746]">
      <button aria-label="Add sheet" className="ml-11 flex w-9 justify-center"><MdAdd size={19} /></button>
      <button aria-label="All sheets" className="ml-1 flex w-9 justify-center"><MdMenu size={20} /></button>
      <div className="ml-3.5 flex min-w-0 flex-1 items-center overflow-hidden border-r border-[#c7c7c7]">
        <button className="flex h-9 w-[103px] shrink-0 items-center justify-between bg-[#e1e9f7] pr-1.5 pl-3 font-bold text-[#2352b5]">
          MASTER
          <MdArrowDropDown size={19} />
        </button>
        {SHEET_TABS.map((tab) => (
          <button key={tab.label} className={`flex h-9 shrink-0 items-center pr-2 pl-3 whitespace-nowrap ${tab.width}`}>
            {tab.locked && <MdLock size={18} className="mr-0.5 shrink-0" />}
            {tab.label}
            <MdArrowDropDown size={19} className="ml-auto shrink-0" />
          </button>
        ))}
      </div>
      <button aria-label="Scroll left" className="ml-2 flex w-7 justify-center text-[#b0b2b6]"><MdChevronLeft size={20} /></button>
      <button aria-label="Scroll right" className="ml-3 flex w-7 justify-center"><MdChevronRight size={20} /></button>
      <button aria-label="Show side panel" className="mr-[18px] ml-[117px]"><MdChevronLeft size={20} /></button>
    </div>
  );
}

/* ---------- taskbar ---------- */

const APPS = [
  { name: 'Task View', icon: <TaskViewIcon /> },
  { name: 'Copilot', icon: <CopilotIcon /> },
  { name: 'Teams', icon: <TeamsIcon /> },
  { name: 'Edge', icon: <EdgeIcon /> },
  { name: 'Store', icon: <StoreIcon /> },
  { name: 'Power Automate', icon: <AutomateIcon /> },
  { name: 'Dell', icon: <DellIcon /> },
  { name: 'Opera', icon: <OperaIcon /> },
  { name: 'File Explorer', icon: <ExplorerIcon />, open: true },
  { name: 'Chrome', icon: <ChromeIcon />, active: true },
  { name: 'Kiosk', icon: <KioskIcon />, open: true },
  { name: 'Mind', icon: <BrainIcon />, open: true },
  { name: 'Word', icon: <WordIcon />, open: true },
];

function Taskbar() {
  return (
    <footer className={`flex h-12 items-center border-t border-[#cfd0d6] bg-linear-to-r from-[#dfe1ea] via-[#ebe1e4] to-[#e0e0e2] text-xs text-[#1b1b1b] ${CHROME_FONT}`}>
      <button aria-label="Weather" className="relative ml-5">
        <WeatherIcon />
        <span className="absolute -top-1 left-3 flex size-4 items-center justify-center rounded-full bg-[#b8242b] text-[11px] leading-4 text-white">2</span>
      </button>
      <button aria-label="Start" className="ml-[130px]"><WindowsIcon /></button>
      <label className="ml-3 flex h-[31px] w-[219px] items-center rounded-full border border-[#d6d8df] bg-[#f6f7fb] pl-2">
        <MdSearch size={20} />
        <input placeholder="Search" className="ml-2 w-40 text-[13px] placeholder:text-[#5d6066]" />
      </label>
      <div className="ml-[3px] flex h-full items-center">
        {APPS.map((app) => (
          <button key={app.name} aria-label={app.name} className="flex h-full w-11 flex-col items-center justify-end">
            <span className={`relative flex h-9 w-9 items-center justify-center rounded-md ${app.active ? 'bg-[#f8f6f8]' : ''}`}>
              {app.icon}
              {app.active && (
                <span className="absolute top-0.5 right-0.5 flex size-4 items-center justify-center rounded-full bg-[#00493c] text-[9px] text-white">L</span>
              )}
            </span>
            <span className={`mb-1 h-[3px] rounded-full ${app.active ? 'w-4 bg-[#3c7f8b]' : app.open ? 'w-1.5 bg-[#85868c]' : 'w-1.5'}`} />
          </button>
        ))}
      </div>
      <div className="mr-5 ml-auto flex items-center">
        <MdExpandLess size={20} />
        <span className="ml-[13px]"><OneDriveIcon /></span>
        <span className="ml-4 text-center text-[11px] leading-4">ENG<br />IN</span>
        <span className="ml-[18px]"><WifiIcon /></span>
        <span className="ml-2"><SpeakerIcon /></span>
        <span className="ml-2"><BatteryIcon /></span>
        <span className="ml-3.5 text-right text-xs leading-4">06:36<br />20-02-2025</span>
        <span className="ml-2"><BellIcon /></span>
      </div>
    </footer>
  );
}

export default function App() {
  return (
    <div className="flex h-screen flex-col overflow-hidden bg-[#f9fbfd] font-['Roboto',sans-serif]">
      <div className={`shrink-0 bg-[#a81c1c] ${CHROME_FONT}`}>
        <TabStrip />
        <AddressBar />
        <BookmarksBar />
        <InfoBar />
      </div>
      <div className="shrink-0">
        <SheetHeader />
        <div className="pt-[3px]"><Toolbar /></div>
        <FormulaBar />
      </div>
      <Grid />
      <div className="shrink-0">
        <HorizontalScroll />
        <SheetTabs />
        <Taskbar />
      </div>
    </div>
  );
}
